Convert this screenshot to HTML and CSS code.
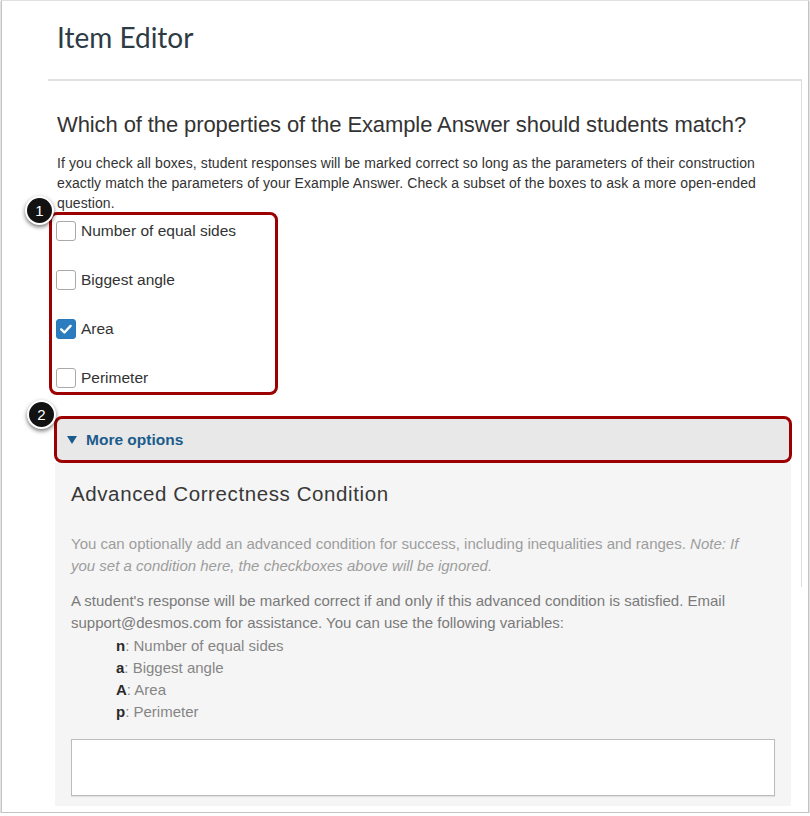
FILE: index.html
```html
<!DOCTYPE html>
<html>
<head>
<meta charset="utf-8">
<link rel="stylesheet" href="styles.css">
</head>
<body>
<div class="frame">
  <h1 class="title">Item Editor</h1>
  <div class="editor">
    <h2 class="question">Which of the properties of the Example Answer should students match?</h2>
    <p class="hint">If you check all boxes, student responses will be marked correct so long as the parameters of their construction exactly match the parameters of your Example Answer. Check a subset of the boxes to ask a more open-ended question.</p>
    <div class="callout callout-list">
      <span class="badge">1</span>
      <label class="check-row"><span class="box"></span>Number of equal sides</label>
      <label class="check-row"><span class="box"></span>Biggest angle</label>
      <label class="check-row"><span class="box box-checked"><svg width="20" height="20" viewBox="0 0 20 20"><path d="M5.2 10.4l3.2 3.1 6.2-6.6" fill="none" stroke="#fff" stroke-width="2.4" stroke-linecap="round" stroke-linejoin="round"/></svg></span>Area</label>
      <label class="check-row"><span class="box"></span>Perimeter</label>
    </div>
    <div class="more">
      <div class="callout callout-bar">
        <span class="badge">2</span>
        <span class="tri"></span>
        <span class="more-label">More options</span>
      </div>
      <div class="advanced">
        <h3 class="adv-title">Advanced Correctness Condition</h3>
        <p class="note">You can optionally add an advanced condition for success, including inequalities and ranges. <em>Note: If<br>you set a condition here, the checkboxes above will be ignored.</em></p>
      </div>
    </div>
  </div>
  <div class="advanced-cont">
    <p class="desc">A student's response will be marked correct if and only if this advanced condition is satisfied. Email<br>support@desmos.com for assistance. You can use the following variables:</p>
    <ul class="vars">
      <li><b>n</b>: Number of equal sides</li>
      <li><b>a</b>: Biggest angle</li>
      <li><b>A</b>: Area</li>
      <li><b>p</b>: Perimeter</li>
    </ul>
    <div class="input"></div>
  </div>
</div>
</body>
</html>
```
FILE: styles.css
```css
* { box-sizing: border-box; }
body {
  margin: 0;
  background: #fff;
  font-family: "Liberation Sans", Arial, sans-serif;
}
.frame {
  width: 808px;
  margin-left: 1px;
  border: 1px solid #c4c4c4;
  border-top-color: #e0e0e0;
  box-shadow: 0 1px 2px rgba(0, 0, 0, 0.35);
  padding-bottom: 6px;
  background: #fff;
}
.title {
  margin: 0;
  padding: 19px 0 25px 55px;
  font-family: Lato, "Liberation Sans", sans-serif;
  font-weight: 400;
  font-size: 28px;
  line-height: 34px;
  color: #2d3b45;
}
.editor {
  margin: 0 6px 0 46px;
  border-top: 2px solid #dfe1e4;
  border-right: 1px solid #dcdcdc;
  padding: 31px 0 0 9px;
}
.question {
  margin: 0;
  font-weight: 400;
  font-size: 22px;
  line-height: 26px;
  letter-spacing: -0.1px;
  color: #333;
}
.hint {
  max-width: 712px;
  margin: 15px 0 0;
  font-size: 14px;
  line-height: 20px;
  letter-spacing: 0.09px;
  color: #333;
}
.callout {
  position: relative;
  border: 3px solid #9c0000;
  border-radius: 8px;
}
.callout-list {
  width: 229px;
  margin: -1px 0 0 -8px;
  padding: 6px 0 4px 4px;
}
.check-row {
  display: flex;
  align-items: center;
  gap: 5px;
  height: 20px;
  margin-bottom: 29px;
  font-size: 15.5px;
  color: #333;
}
.check-row:last-child { margin-bottom: 0; }
.box {
  width: 20px;
  height: 20px;
  flex: none;
  border: 1px solid #a9a9a9;
  border-radius: 3px;
  background: #fff;
}
.box-checked {
  border-color: #2a78b8;
  background: #2c7dbf;
}
.box-checked svg { display: block; margin: -1px; }
.badge {
  position: absolute;
  width: 29px;
  height: 29px;
  border: 2px solid #fff;
  border-radius: 50%;
  background: #121212;
  color: #fff;
  font-size: 15px;
  display: flex;
  align-items: center;
  justify-content: center;
  box-shadow: 0 2px 4px rgba(0, 0, 0, 0.55);
}
.callout-list .badge { left: -27px; top: -19px; }
.callout-bar .badge { left: -30px; top: -19px; }
.more {
  margin: 21px 9px 0 -3px;
}
.callout-bar {
  height: 47px;
  background: #e8e8e8;
  display: flex;
  align-items: center;
  padding-left: 10px;
  gap: 9px;
}
.tri {
  width: 0;
  height: 0;
  border-left: 5px solid transparent;
  border-right: 5px solid transparent;
  border-top: 8px solid #1b5c8c;
  margin-top: 1px;
}
.more-label {
  font-weight: 700;
  font-size: 15.5px;
  color: #1b5c8c;
}
.advanced {
  margin: 0 1px;
  background: #f5f5f5;
  padding: 19px 16px 10px;
}
.adv-title {
  margin: 0;
  font-weight: 400;
  font-size: 20.5px;
  line-height: 24px;
  letter-spacing: 0.6px;
  color: #383838;
}
.note {
  margin: 27px 0 0;
  font-size: 15px;
  line-height: 22px;
  color: #9d9d9d;
  white-space: nowrap;
}
.advanced-cont {
  width: 736px;
  margin-left: 53px;
  background: #f5f5f5;
  padding: 3px 16px 10px;
}
.desc {
  margin: 0;
  font-size: 15px;
  line-height: 22px;
  color: #7a7a7a;
  white-space: nowrap;
}
.vars {
  list-style: none;
  margin: 1px 0 0;
  padding: 0 0 0 45px;
  font-size: 15px;
  line-height: 22px;
  color: #858585;
}
.vars b {
  color: #2a2a2a;
}
.input {
  height: 57px;
  margin-top: 16px;
  border: 1px solid #bdbdbd;
  background: #fff;
  box-shadow: 0 1px 1px rgba(0, 0, 0, 0.08);
}
```
